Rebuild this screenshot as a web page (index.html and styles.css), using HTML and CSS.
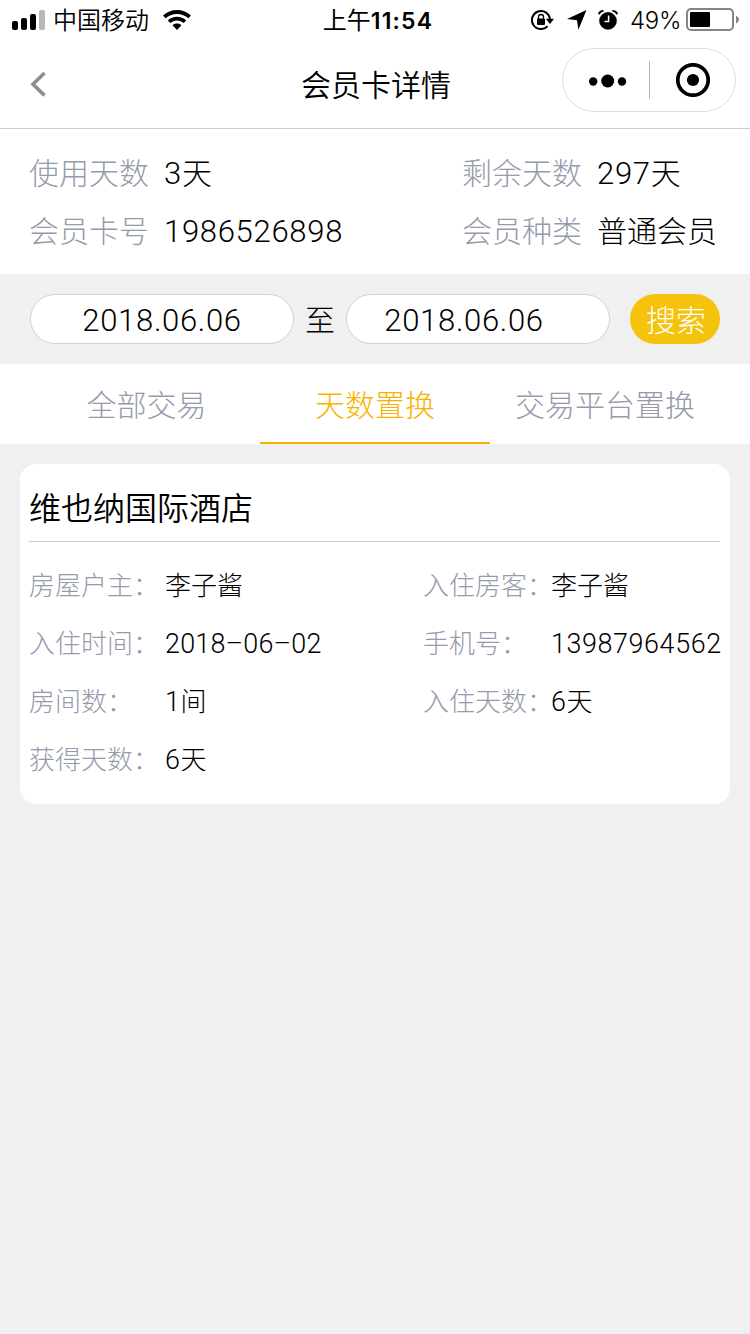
FILE: index.html
```html
<!DOCTYPE html>
<html lang="zh-CN">
<head>
<meta charset="utf-8">
<title>会员卡详情</title>
<link rel="stylesheet" href="styles.css">
</head>
<body>
<header class="header">
  <div class="status">
    <div class="status-left">
      <svg class="signal" width="34" height="20" viewBox="0 0 34 20"><rect x="0" y="11" width="6" height="9" rx="2"/><rect x="9" y="8" width="6" height="12" rx="2"/><rect x="18" y="4" width="6" height="16" rx="2"/><rect x="27" y="0" width="6" height="20" rx="2" fill="#b9b9b9"/></svg>
      <span class="carrier">中国移动</span>
      <svg class="wifi" width="28" height="20" viewBox="0 0 28 20"><path d="M14 0C8.600 0 3.700 2 0 5.500l2.600 2.800C5.700 5.500 9.600 3.900 14 3.900s8.300 1.600 11.400 4.400L28 5.500C24.300 2 19.400 0 14 0z"/><path d="M14 6.800c-3.500 0-6.700 1.300-9.200 3.600l2.600 2.700c1.800-1.600 4-2.600 6.600-2.600s4.800 1 6.600 2.600l2.600-2.700c-2.500-2.300-5.700-3.600-9.200-3.600z"/><path d="M14 13.500c-1.700 0-3.200.6-4.500 1.700L14 20l4.500-4.800c-1.300-1.100-2.800-1.700-4.500-1.700z"/></svg>
    </div>
    <div class="clock">上午<span class="time">11:54</span></div>
    <div class="status-right">
      <svg class="lock" width="24" height="20" viewBox="0 0 24 20"><path d="M16.500 16.200A9 9 0 1 1 18.900 9" fill="none" stroke="#000" stroke-width="2"/><path d="M14.800 8.800h8.200L19 14z"/><rect x="6" y="8.500" width="8" height="6.500" rx="1"/><path d="M7.500 9V7a2.500 2.500 0 0 1 5 0v2" fill="none" stroke="#000" stroke-width="1.300"/></svg>
      <svg class="arrow" width="20" height="20" viewBox="0 0 20 20"><path d="M19.500 0 11.400 19.800 10 10.300 0 9z"/></svg>
      <svg class="alarm" width="20" height="20" viewBox="0 0 20 20"><circle cx="10" cy="10.900" r="8.800"/><path d="M.8 4.300A5 5 0 0 1 5.500.9M19.200 4.300A5 5 0 0 0 14.500.9" fill="none" stroke="#000" stroke-width="1.900"/><path d="M10.600 5.500v6H6.500" fill="none" stroke="#fff" stroke-width="1.500"/></svg>
      <span class="percent">49%</span>
      <svg class="battery" width="54" height="24" viewBox="0 0 54 24"><rect x="1" y="1" width="46" height="21" rx="4" fill="none" stroke="#858585" stroke-width="2"/><rect x="4" y="4" width="20" height="15" rx="1"/><path d="M50 7.500q3 2 3 4t-3 4z" fill="#858585"/></svg>
    </div>
  </div>
  <div class="navbar">
    <svg class="back" width="18" height="26" viewBox="0 0 18 26"><path d="M15.500 2 4 13.200 15.500 24.400" fill="none" stroke="#8f8f8f" stroke-width="3.600"/></svg>
    <h1 class="nav-title">会员卡详情</h1>
    <div class="capsule">
      <div class="capsule-item dots"><svg width="38" height="14" viewBox="0 0 38 14"><circle cx="4.200" cy="7.500" r="4.200"/><circle cx="18.700" cy="7" r="6.500"/><circle cx="33" cy="7.500" r="4.200"/></svg></div>
      <div class="capsule-line"></div>
      <div class="capsule-item"><svg width="34" height="34" viewBox="0 0 34 34"><circle cx="17" cy="17" r="15.200" fill="none" stroke="#000" stroke-width="3.700"/><circle cx="17" cy="17" r="6.100"/></svg></div>
    </div>
  </div>
</header>

<section class="summary">
  <div class="label">使用天数</div><div class="value"><span class="num">3</span>天</div>
  <div class="label">剩余天数</div><div class="value"><span class="num">297</span>天</div>
  <div class="label">会员卡号</div><div class="value"><span class="num">1986526898</span></div>
  <div class="label">会员种类</div><div class="value">普通会员</div>
</section>

<section class="filter">
  <div class="date"><span class="num">2018.06.06</span></div>
  <span class="to">至</span>
  <div class="date date-end"><span class="num">2018.06.06</span></div>
  <div class="search">搜索</div>
</section>

<nav class="tabs">
  <div class="tab">全部交易</div>
  <div class="tab tab-active">天数置换</div>
  <div class="tab">交易平台置换</div>
</nav>

<main class="card">
  <h2 class="card-title">维也纳国际酒店</h2>
  <div class="details">
    <div class="label">房屋户主：</div><div class="value">李子酱</div>
    <div class="label">入住房客：</div><div class="value">李子酱</div>
    <div class="label">入住时间：</div><div class="value"><span class="num stay-date">2018–06–02</span></div>
    <div class="label">手机号：</div><div class="value"><span class="num">13987964562</span></div>
    <div class="label">房间数：</div><div class="value"><span class="num">1</span>间</div>
    <div class="label">入住天数：</div><div class="value"><span class="num">6</span>天</div>
    <div class="label">获得天数：</div><div class="value"><span class="num">6</span>天</div>
  </div>
</main>
</body>
</html>
```
FILE: styles.css
```css
* { box-sizing: border-box; }
body {
  margin: 0;
  min-height: 1334px;
  background: #f0f0f0;
  color: #000;
  font-family: Inter, "Noto Sans CJK SC", sans-serif;
  font-weight: 300;
  font-size: 30px;
}
svg { display: block; flex: none; }
.num {
  font-family: Roboto, sans-serif;
  font-size: 1.035em;
  line-height: 1;
  letter-spacing: 0.022em;
}
.stay-date { letter-spacing: 0.008em; }
.header { height: 129px; background: #fff; border-bottom: 1px solid #ccc; }
.status {
  display: grid;
  grid-template-columns: 1fr auto 1fr;
  height: 40px;
  padding: 0 10px 0 12px;
  font-size: 24px;
  font-weight: 350;
  line-height: 42px;
}
.status-left, .status-right { display: flex; align-items: center; height: 40px; white-space: nowrap; }
.status-right { justify-content: flex-end; }
.carrier { margin-left: 7px; padding-top: 2px; }
.wifi { margin-left: 14px; }
.clock { padding-left: 4px; font-weight: 400; }
.time { font-weight: 600; font-size: 23px; letter-spacing: 1.2px; }
.arrow { margin-left: 12px; }
.alarm { margin-left: 11px; }
.percent { width: 50px; margin: 0 6px 0 12px; padding-top: 2px; letter-spacing: -0.3px; }
.navbar {
  display: grid;
  grid-template-columns: 1fr auto 1fr;
  align-items: center;
  height: 80px;
  padding: 0 14px 0 29px;
}
.nav-title { margin: 0 13px 0 0; padding-top: 10px; font-size: 30px; font-weight: 350; line-height: 44px; }
.back { margin-top: 8px; }
.capsule {
  display: flex;
  align-items: center;
  justify-self: end;
  width: 174px;
  height: 64px;
  border: 1px solid #dedede;
  border-radius: 32px;
}
.capsule-item { display: flex; flex: 1; justify-content: center; }
.dots { flex: 0 0 86px; padding: 1px 0 0 4px; }
.capsule-line { width: 1px; height: 38px; background: #b5b5b5; }
.label { color: #959bab; white-space: nowrap; }
.value { white-space: nowrap; }
.summary {
  display: grid;
  grid-template-columns: 135px 298px 135px 1fr;
  grid-auto-rows: 58px;
  height: 145px;
  padding: 15px 0 0 29px;
  background: #fff;
  line-height: 58px;
}
.filter { display: flex; align-items: center; height: 90px; padding: 0 30px; }
.date {
  width: 264px;
  height: 50px;
  border: 1px solid #d0d0d0;
  border-radius: 25px;
  background: #fff;
  text-align: center;
  line-height: 50px;
}
.date-end { padding-right: 28px; }
.to { width: 52px; padding-bottom: 2px; text-align: center; }
.search {
  width: 90px;
  height: 50px;
  margin-left: 20px;
  padding-left: 2px;
  border-radius: 25px;
  background: #f5c20c;
  color: #fff;
  text-align: center;
  line-height: 52px;
}
.tabs { display: flex; height: 80px; padding: 0 30px; background: #fff; }
.tab { width: 230px; color: #959bab; text-align: center; line-height: 82px; }
.tab:first-child { padding-left: 3px; }
.tab-active { border-bottom: 2px solid #f6b400; color: #f6b400; }
.card { height: 340px; margin: 20px 20px 0; padding: 0 10px; border-radius: 16px; background: #fff; }
.card-title {
  height: 78px;
  margin: 0 0 0 -1px;
  border-bottom: 1px solid #ccc;
  font-size: 32px;
  font-weight: 350;
  line-height: 89px;
}
.details {
  display: grid;
  grid-template-columns: 136px 258px 128px 1fr;
  grid-auto-rows: 58px;
  margin-left: -1px;
  padding-top: 15px;
  font-size: 26px;
  line-height: 58px;
}
```
